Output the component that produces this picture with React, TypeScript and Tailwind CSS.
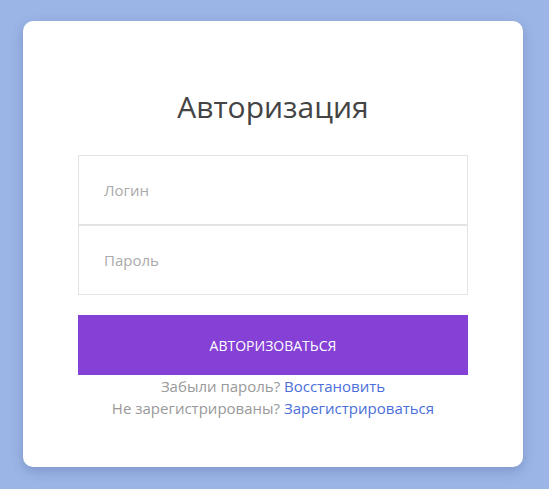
export default function App() {
  return (
    <div
      className="flex h-[489px] w-[549px] bg-[#9bb5e6] pl-[23px] pt-[21px]"
      style={{ fontFamily: '"Open Sans", sans-serif' }}
    >
      <div className="h-[446px] w-[500px] rounded-[10px] bg-white px-[55px] pt-[66px] shadow-[0_4px_12px_rgba(40,60,120,0.25)]">
        <h1 className="mb-[28px] text-center text-[30px] leading-[40px] text-[#444]">Авторизация</h1>
        <div className="flex flex-col">
          <input
            placeholder="Логин"
            className="h-[70px] border border-[#e3e3e3] px-[25px] text-[15px] text-[#444] outline-none placeholder:text-[#aaa]"
          />
          <input
            type="password"
            placeholder="Пароль"
            className="h-[70px] border border-[#e3e3e3] px-[25px] text-[15px] text-[#444] outline-none placeholder:text-[#aaa]"
          />
        </div>
        <button className="mt-[20px] h-[60px] w-full bg-[#8540d6] text-[14px] uppercase text-white">
          Авторизоваться
        </button>
        <div className="text-center text-[15px] leading-[22px] text-[#999]">
          <p>
            Забыли пароль? <a className="text-[#4a6fd9]">Восстановить</a>
          </p>
          <p>
            Не зарегистрированы? <a className="text-[#4a6fd9]">Зарегистрироваться</a>
          </p>
        </div>
      </div>
    </div>
  )
}
